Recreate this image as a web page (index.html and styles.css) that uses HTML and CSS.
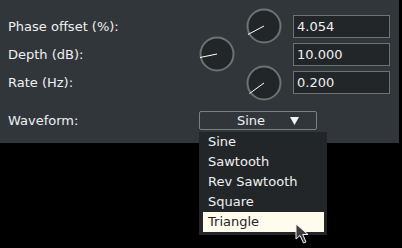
FILE: index.html
```html
<html>
<head>
  <meta charset="utf-8">
  <link rel="stylesheet" href="styles.css">
</head>
<body>
  <div id="panel">
    <div class="labels">
      <span>Phase offset (%):</span>
      <span>Depth (dB):</span>
      <span>Rate (Hz):</span>
    </div>
    <div class="knobs">
      <div class="knobcol left">
        <svg class="knob" width="36" height="36" viewBox="0 0 36 36"><circle cx="18" cy="18" r="16.5"/><line x1="18" y1="18" x2="1" y2="21.5"/></svg>
      </div>
      <div class="knobcol right">
        <svg class="knob" width="36" height="36" viewBox="0 0 36 36"><circle cx="18" cy="18" r="16.5"/><line x1="18" y1="18" x2="2" y2="26.5"/></svg>
        <svg class="knob" width="36" height="36" viewBox="0 0 36 36"><circle cx="18" cy="18" r="16.5"/><line x1="18" y1="18" x2="3.5" y2="28.5"/></svg>
      </div>
    </div>
    <div class="boxes">
      <div class="numbox">4.054</div>
      <div class="numbox">10.000</div>
      <div class="numbox">0.200</div>
    </div>

    <span class="wavelabel">Waveform:</span>
    <div class="combo">
      <div class="combobtn">
        <span>Sine</span>
        <svg class="arrow" width="9" height="8" viewBox="0 0 9 8"><polygon points="0,0 9,0 4.5,8"/></svg>
      </div>
      <ul class="menu">
        <li>Sine</li>
        <li>Sawtooth</li>
        <li>Rev Sawtooth</li>
        <li>Square</li>
        <li class="hover">Triangle</li>
      </ul>
      <svg class="cursor" width="16" height="22" viewBox="0 0 16 22"><path d="M1 1 L1 16 L5 12.5 L8.5 20 L11 19 L7.8 11.5 L13 11.5 Z"/></svg>
    </div>
  </div>
</body>
</html>
```

FILE: styles.css
```css
body {
  margin: 0;
  background: #000;
  font-family: "DejaVu Sans", sans-serif;
  font-size: 13px;
  color: #eff0f1;
}

#panel {
  width: 399px;
  height: 143px;
  box-sizing: border-box;
  background: #31363b;
  padding: 8px 0 0 8px;
  display: grid;
  grid-template-columns: 191px 94px 97px;
  grid-template-rows: 93px 19px;
  row-gap: 10px;
}

.labels {
  display: flex;
  flex-direction: column;
  gap: 5px;
  padding-top: 7px;
}
.labels span {
  line-height: 23px;
}

.knobs {
  display: flex;
  gap: 11px;
}
.knobcol {
  display: flex;
  flex-direction: column;
  gap: 21px;
}
.knobcol.left {
  padding-top: 28px;
}
.knob circle {
  fill: #232629;
  stroke: #6c7372;
  stroke-width: 2;
}
.knob line {
  stroke: #fff;
  stroke-width: 1;
}

.boxes {
  display: flex;
  flex-direction: column;
  gap: 5px;
  padding-top: 7px;
}
.numbox {
  height: 23px;
  box-sizing: border-box;
  border: 1px solid #6c7372;
  background: #232629;
  padding-left: 3px;
  line-height: 21px;
}

.wavelabel {
  line-height: 19px;
}

.combo {
  grid-column: 2 / 4;
  position: relative;
}
.combobtn {
  width: 118px;
  height: 19px;
  box-sizing: border-box;
  border: 1px solid #7a8180;
  border-radius: 2px;
  padding-left: 37px;
  display: flex;
  align-items: center;
  gap: 25px;
}
.arrow polygon {
  fill: #f4f4f4;
}

.menu {
  position: absolute;
  top: 21px;
  left: 0;
  width: 128px;
  box-sizing: border-box;
  margin: 0;
  padding: 0 3px 3px 4px;
  list-style: none;
  background: #232629;
}
.menu li {
  height: 20px;
  line-height: 20px;
  padding-left: 5px;
}
.menu li.hover {
  background: #fffcee;
  color: #232629;
}

.cursor {
  position: absolute;
  left: 96px;
  top: 112px;
}
.cursor path {
  fill: #3d3d3d;
  stroke: #f0f0f0;
  stroke-width: 1;
}
```
